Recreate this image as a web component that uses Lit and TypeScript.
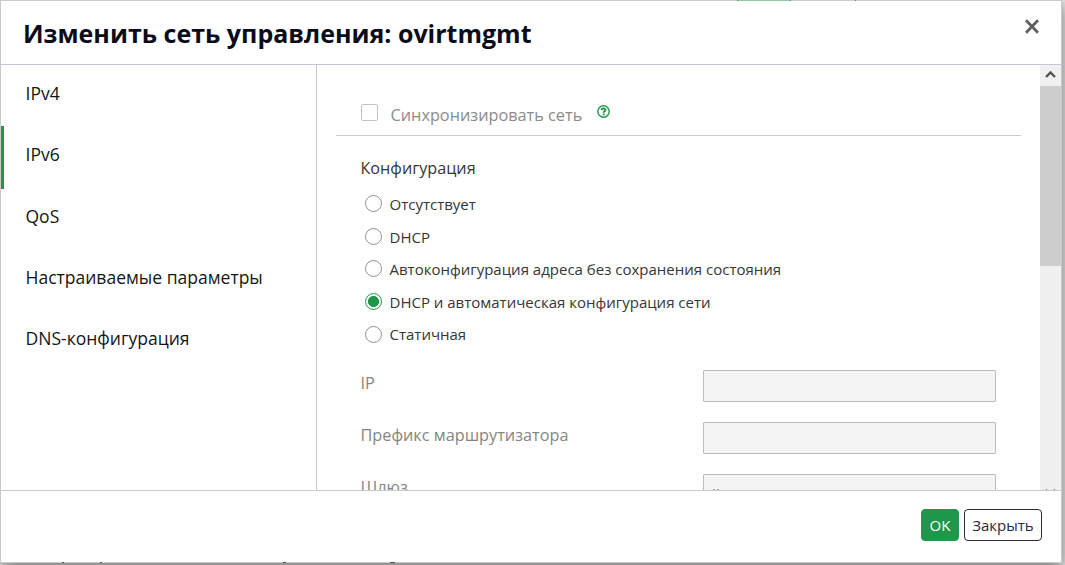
import { LitElement, html, css, svg } from "lit";
import { customElement, state } from "lit/decorators.js";

@customElement("app-root")
export class AppRoot extends LitElement {
  @state() private tab = 1;
  @state() private mode = 3;

  private tabs = ["IPv4", "IPv6", "QoS", "Настраиваемые параметры", "DNS-конфигурация"];
  private modes = [
    "Отсутствует",
    "DHCP",
    "Автоконфигурация адреса без сохранения состояния",
    "DHCP и автоматическая конфигурация сети",
    "Статичная",
  ];
  private fields = [
    { label: "IP", value: "" },
    { label: "Префикс маршрутизатора", value: "" },
    { label: "Шлюз", value: "::" },
  ];

  static styles = css`
    :host {
      display: block;
      position: relative;
      width: 100%;
      height: 565px;
      overflow: hidden;
      background: #e6e6e6;
      font-family: "Open Sans", "Noto Sans", sans-serif;
      color: #363636;
    }
    * { box-sizing: border-box; }
    .dialog {
      width: 1062px;
      height: 563px;
      display: flex;
      flex-direction: column;
      border: 1px solid #cacaca;
      background: #fff;
      box-shadow: 0 5px 15px rgba(0, 0, 0, 0.5);
    }
    .behind {
      position: absolute;
      top: 0;
      left: 737px;
      width: 54px;
      height: 1px;
      background: #8fc7a4;
      border: solid #777;
      border-width: 0 1px;
    }
    .tick {
      position: absolute;
      top: 0;
      left: 855px;
      width: 1px;
      height: 1px;
      background: #777;
    }
    .glyph-top {
      position: absolute;
      top: 562px;
      width: 2px;
      height: 1px;
      background: #555;
    }
    .glyph-top.a { left: 62px; }
    .glyph-top.b { left: 100px; }
    .glyph-top.c { left: 283px; width: 3px; }
    .glyph-top.d { left: 390px; width: 5px; }
    header {
      flex: none;
      height: 64px;
      display: flex;
      justify-content: space-between;
      padding: 0 21.5px 0 22px;
      border-bottom: 1px solid #c1c6da;
    }
    h1 {
      margin: 0;
      padding-top: 14px;
      font-size: 25px;
      line-height: 36px;
      font-weight: 700;
      color: #0b0c1a;
      white-space: nowrap;
    }
    .close { width: 16px; height: 16px; margin-top: 17px; }
    .body { flex: none; height: 425px; display: flex; overflow: hidden; }
    nav {
      flex: none;
      width: 316px;
      border-right: 1px solid #cacaca;
    }
    .tab {
      height: 61.3px;
      padding-left: 24.5px;
      line-height: 57px;
      font-size: 17.52px;
      color: #151515;
      white-space: nowrap;
    }
    .tab.active {
      height: 62.6px;
      margin-bottom: -1.3px;
      border-left: 3px solid #1e974b;
      padding-left: 21.5px;
    }
    .content { flex: 1; padding-left: 19px; }
    .sync {
      width: 685px;
      height: 71px;
      padding: 39px 0 0 25px;
      display: flex;
      border-bottom: 1px solid #ccc;
      color: #8b8b8b;
    }
    .check {
      width: 17px;
      height: 17px;
      border: 1px solid #c3c3c3;
      border-radius: 2px;
    }
    .sync-text { margin: 0 15px 0 12.5px; line-height: 22px; font-size: 16.27px; white-space: nowrap; }
    .help { width: 13px; height: 13px; margin-top: 1px; }
    .heading { padding: 21px 0 0 24.5px; font-size: 16.2px; line-height: 22px; }
    .modes { padding: 15px 0 0 29px; }
    .mode { height: 32.6px; display: flex; gap: 7.5px; font-size: 15px; line-height: 20px; white-space: nowrap; }
    .radio {
      flex: none;
      width: 17px;
      height: 17px;
      margin-top: 1.3px;
      border: 1px solid #8f8f9d;
      border-radius: 50%;
    }
    .mode.on .radio {
      margin-top: 1px;
      border-color: #1e974b;
      background: radial-gradient(circle, #1e974b 5.2px, #fff 5.9px);
    }
    .fields { padding: 13.5px 0 0 24.5px; }
    .field {
      width: 635.5px;
      height: 52px;
      display: flex;
      justify-content: space-between;
      color: #858585;
      font-size: 16.25px;
      line-height: 26px;
    }
    .input {
      width: 293px;
      height: 32px;
      padding: 3px 8px;
      border: 1px solid #bbb;
      border-radius: 1px;
      background: #f4f4f4;
      font-size: 15px;
      line-height: 26px;
    }
    .scroll { flex: none; width: 21px; background: #f0f0f0; overflow: hidden; }
    .scroll svg { display: block; width: 21px; height: 21px; }
    .thumb { height: 180px; background: #cdcdcd; }
    .down { margin-top: 216px; }
    footer {
      flex: 1;
      display: flex;
      justify-content: flex-end;
      gap: 5px;
      padding: 18px 19px 0 0;
      border-top: 1px solid #cacaca;
    }
    .btn {
      height: 32px;
      border: 1px solid #292a45;
      border-radius: 4px;
      background: #fff;
      color: #292a45;
      font: 15px/31px "Open Sans", sans-serif;
      text-align: center;
      padding: 0;
      width: 78px;
    }
    .btn.ok { width: 38px; background: #1e974b; border-color: #1e974b; color: #fff; }
  `;

  private arrow(down: boolean) {
    return html`<svg viewBox="0 0 21 21">
      ${svg`<path d=${down ? "M5.7 8L10.5 12.5L15.3 8" : "M6 12L10.5 7.5L15 12"} fill="none" stroke="#555" stroke-width="2.4"/>`}
    </svg>`;
  }

  render() {
    return html`
      <div class="dialog">
        <header>
          <h1>Изменить сеть управления: ovirtmgmt</h1>
          <svg class="close" viewBox="0 0 16 16">
            <path d="M2 2.2L14 14.8M14 2.2L2 14.8" stroke="#606060" stroke-width="2.8" />
          </svg>
        </header>
        <div class="body">
          <nav>
            ${this.tabs.map(
              (t, i) => html`<div class="tab ${i === this.tab ? "active" : ""}" @click=${() => (this.tab = i)}>${t}</div>`
            )}
          </nav>
          <div class="content">
            <div class="sync">
              <div class="check"></div>
              <div class="sync-text">Синхронизировать сеть</div>
              <svg class="help" viewBox="0 0 13 13">
                <circle cx="6.5" cy="6.5" r="5.7" fill="none" stroke="#1e974b" stroke-width="1.4" />
                <path d="M4.5 5.1C4.7 2.9 8.6 3.1 8.4 5.1C8.2 6.3 6.6 6.2 6.6 7.7M6.6 8.6V10.3" fill="none" stroke="#1e974b" stroke-width="1.9" />
              </svg>
            </div>
            <div class="heading">Конфигурация</div>
            <div class="modes">
              ${this.modes.map(
                (m, i) => html`<div class="mode ${i === this.mode ? "on" : ""}" @click=${() => (this.mode = i)}>
                  <span class="radio"></span><span>${m}</span>
                </div>`
              )}
            </div>
            <div class="fields">
              ${this.fields.map(
                (f) => html`<div class="field"><span>${f.label}</span><div class="input">${f.value}</div></div>`
              )}
            </div>
          </div>
          <div class="scroll">
            ${this.arrow(false)}
            <div class="thumb"></div>
            <div class="down">${this.arrow(true)}</div>
          </div>
        </div>
        <footer>
          <button class="btn ok">OK</button>
          <button class="btn">Закрыть</button>
        </footer>
      </div>
      <div class="behind"></div>
      <div class="tick"></div>
      <div class="glyph-top a"></div>
      <div class="glyph-top b"></div>
      <div class="glyph-top c"></div>
      <div class="glyph-top d"></div>
    `;
  }
}
